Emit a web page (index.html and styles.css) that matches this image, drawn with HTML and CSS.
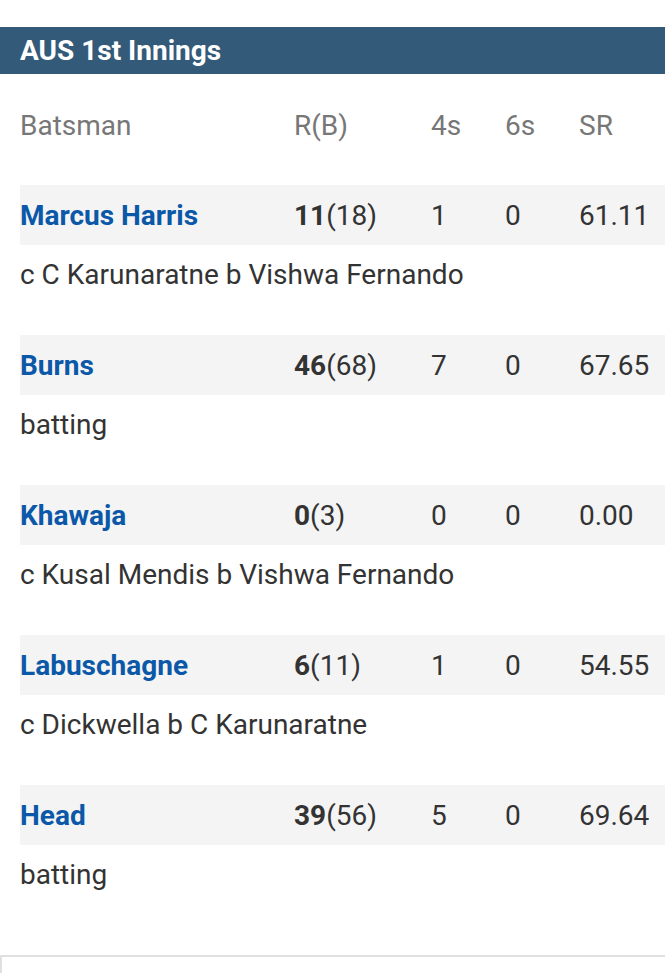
FILE: index.html
```html
<!DOCTYPE html>
<html>
<head>
<meta charset="utf-8">
<link rel="stylesheet" href="styles.css">
</head>
<body>
<div class="page">
  <h2 class="title">AUS 1st Innings</h2>
  <div class="table">
    <div class="row head">
      <span>Batsman</span><span>R(B)</span><span>4s</span><span>6s</span><span>SR</span>
    </div>
    <div class="batter">
      <div class="row stat">
        <a class="name">Marcus Harris</a><span><b>11</b>(18)</span><span>1</span><span>0</span><span>61.11</span>
      </div>
      <div class="how">c C Karunaratne b Vishwa Fernando</div>
    </div>
    <div class="batter">
      <div class="row stat">
        <a class="name">Burns</a><span><b>46</b>(68)</span><span>7</span><span>0</span><span>67.65</span>
      </div>
      <div class="how">batting</div>
    </div>
    <div class="batter">
      <div class="row stat">
        <a class="name">Khawaja</a><span><b>0</b>(3)</span><span>0</span><span>0</span><span>0.00</span>
      </div>
      <div class="how">c Kusal Mendis b Vishwa Fernando</div>
    </div>
    <div class="batter">
      <div class="row stat">
        <a class="name">Labuschagne</a><span><b>6</b>(11)</span><span>1</span><span>0</span><span>54.55</span>
      </div>
      <div class="how">c Dickwella b C Karunaratne</div>
    </div>
    <div class="batter">
      <div class="row stat">
        <a class="name">Head</a><span><b>39</b>(56)</span><span>5</span><span>0</span><span>69.64</span>
      </div>
      <div class="how">batting</div>
    </div>
  </div>
  <div class="next"></div>
</div>
</body>
</html>
```
FILE: styles.css
```css
* { box-sizing: border-box; }
html, body { margin: 0; padding: 0; background: #fff; }
body {
  font-family: Roboto, "Noto Sans", sans-serif;
  font-size: 28px;
  color: #333;
  overflow: hidden;
}
.page { padding-top: 27px; }
.title {
  margin: 0;
  height: 47px;
  line-height: 47px;
  background: #345a7a;
  color: #fff;
  font-size: 28px;
  font-weight: 700;
  padding-left: 20px;
}
.table {
  padding-left: 20px;
  padding-top: 21px;
}
.row {
  display: grid;
  grid-template-columns: 274px 137px 74px 74px 1fr;
  height: 60px;
  align-items: center;
}
.head { color: #777; margin-bottom: 30px; }
.stat { background: #f4f4f4; }
.name {
  color: #0b58a8;
  font-weight: 700;
  text-decoration: none;
}
.stat b { font-weight: 700; }
.how {
  height: 60px;
  line-height: 60px;
}
.batter { margin-bottom: 30px; }
.batter:last-child { margin-bottom: 50px; }
.next {
  height: 40px;
  border-top: 2px solid #e0e0e0;
  border-left: 2px solid #e0e0e0;
}
```
